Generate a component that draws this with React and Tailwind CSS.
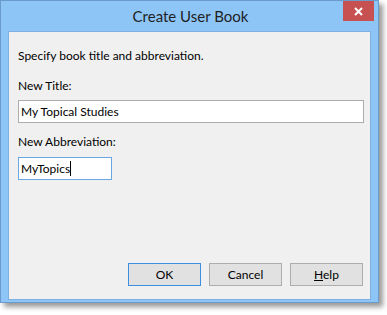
import React from "react";

const DialogButton = ({ children, isDefault }) => (
  <button
    type="button"
    className={`w-[73px] h-[23px] text-[12px] text-black bg-[#e1e1e1] border ${
      isDefault ? "border-[#3c8fe0]" : "border-[#adadad]"
    } flex items-center justify-center`}
  >
    {children}
  </button>
);

const App = () => {
  return (
    <div className="w-[387px] h-[315px] bg-white font-['Lato',sans-serif] text-black">
      <div className="w-[379px] h-[303px] border border-[#6a9bcb] bg-[#8dc5f7] flex flex-col shadow-[4px_4px_5px_rgba(0,0,0,0.4)]">
        {/* title bar */}
        <div className="relative h-[30px] flex items-center justify-center">
          <span className="text-[15px] text-[#1f1f1f] leading-none pt-[1px] pl-[2px]">
            Create User Book
          </span>
          <div className="absolute top-0 right-[4px] w-[31px] h-[20px] bg-[#c75050] flex items-center justify-center">
            <svg width="9" height="9" viewBox="0 0 9 9">
              <path d="M1 1L8 8M8 1L1 8" stroke="white" strokeWidth="2" />
            </svg>
          </div>
        </div>

        {/* client area */}
        <div className="mx-[7px] mb-[2px] flex-1 border border-[#7fb0e0] bg-[#f0f0f0] flex flex-col pl-[9px] pr-[6px] pt-[16px] pb-[13px] text-[12px] leading-[16px]">
          <div>Specify book title and abbreviation.</div>

          <div className="mt-[14px]">New Title:</div>
          <div className="mt-[6px] h-[23px] w-[346px] border border-[#abadb3] bg-white flex items-center pl-[2px]">
            My Topical Studies
          </div>

          <div className="mt-[11px]">New Abbreviation:</div>
          <div className="mt-[7px] h-[23px] w-[94px] border border-[#6aa5e6] bg-white flex items-center pl-[2px]">
            <span>MyTopics</span>
            <span className="w-px h-[15px] bg-black" />
          </div>

          <div className="mt-auto flex justify-end gap-[8px] pr-[1px]">
            <DialogButton isDefault>OK</DialogButton>
            <DialogButton>Cancel</DialogButton>
            <DialogButton>
              <span>
                <span className="underline underline-offset-1">H</span>elp
              </span>
            </DialogButton>
          </div>
        </div>
      </div>
    </div>
  );
};

export default App;
